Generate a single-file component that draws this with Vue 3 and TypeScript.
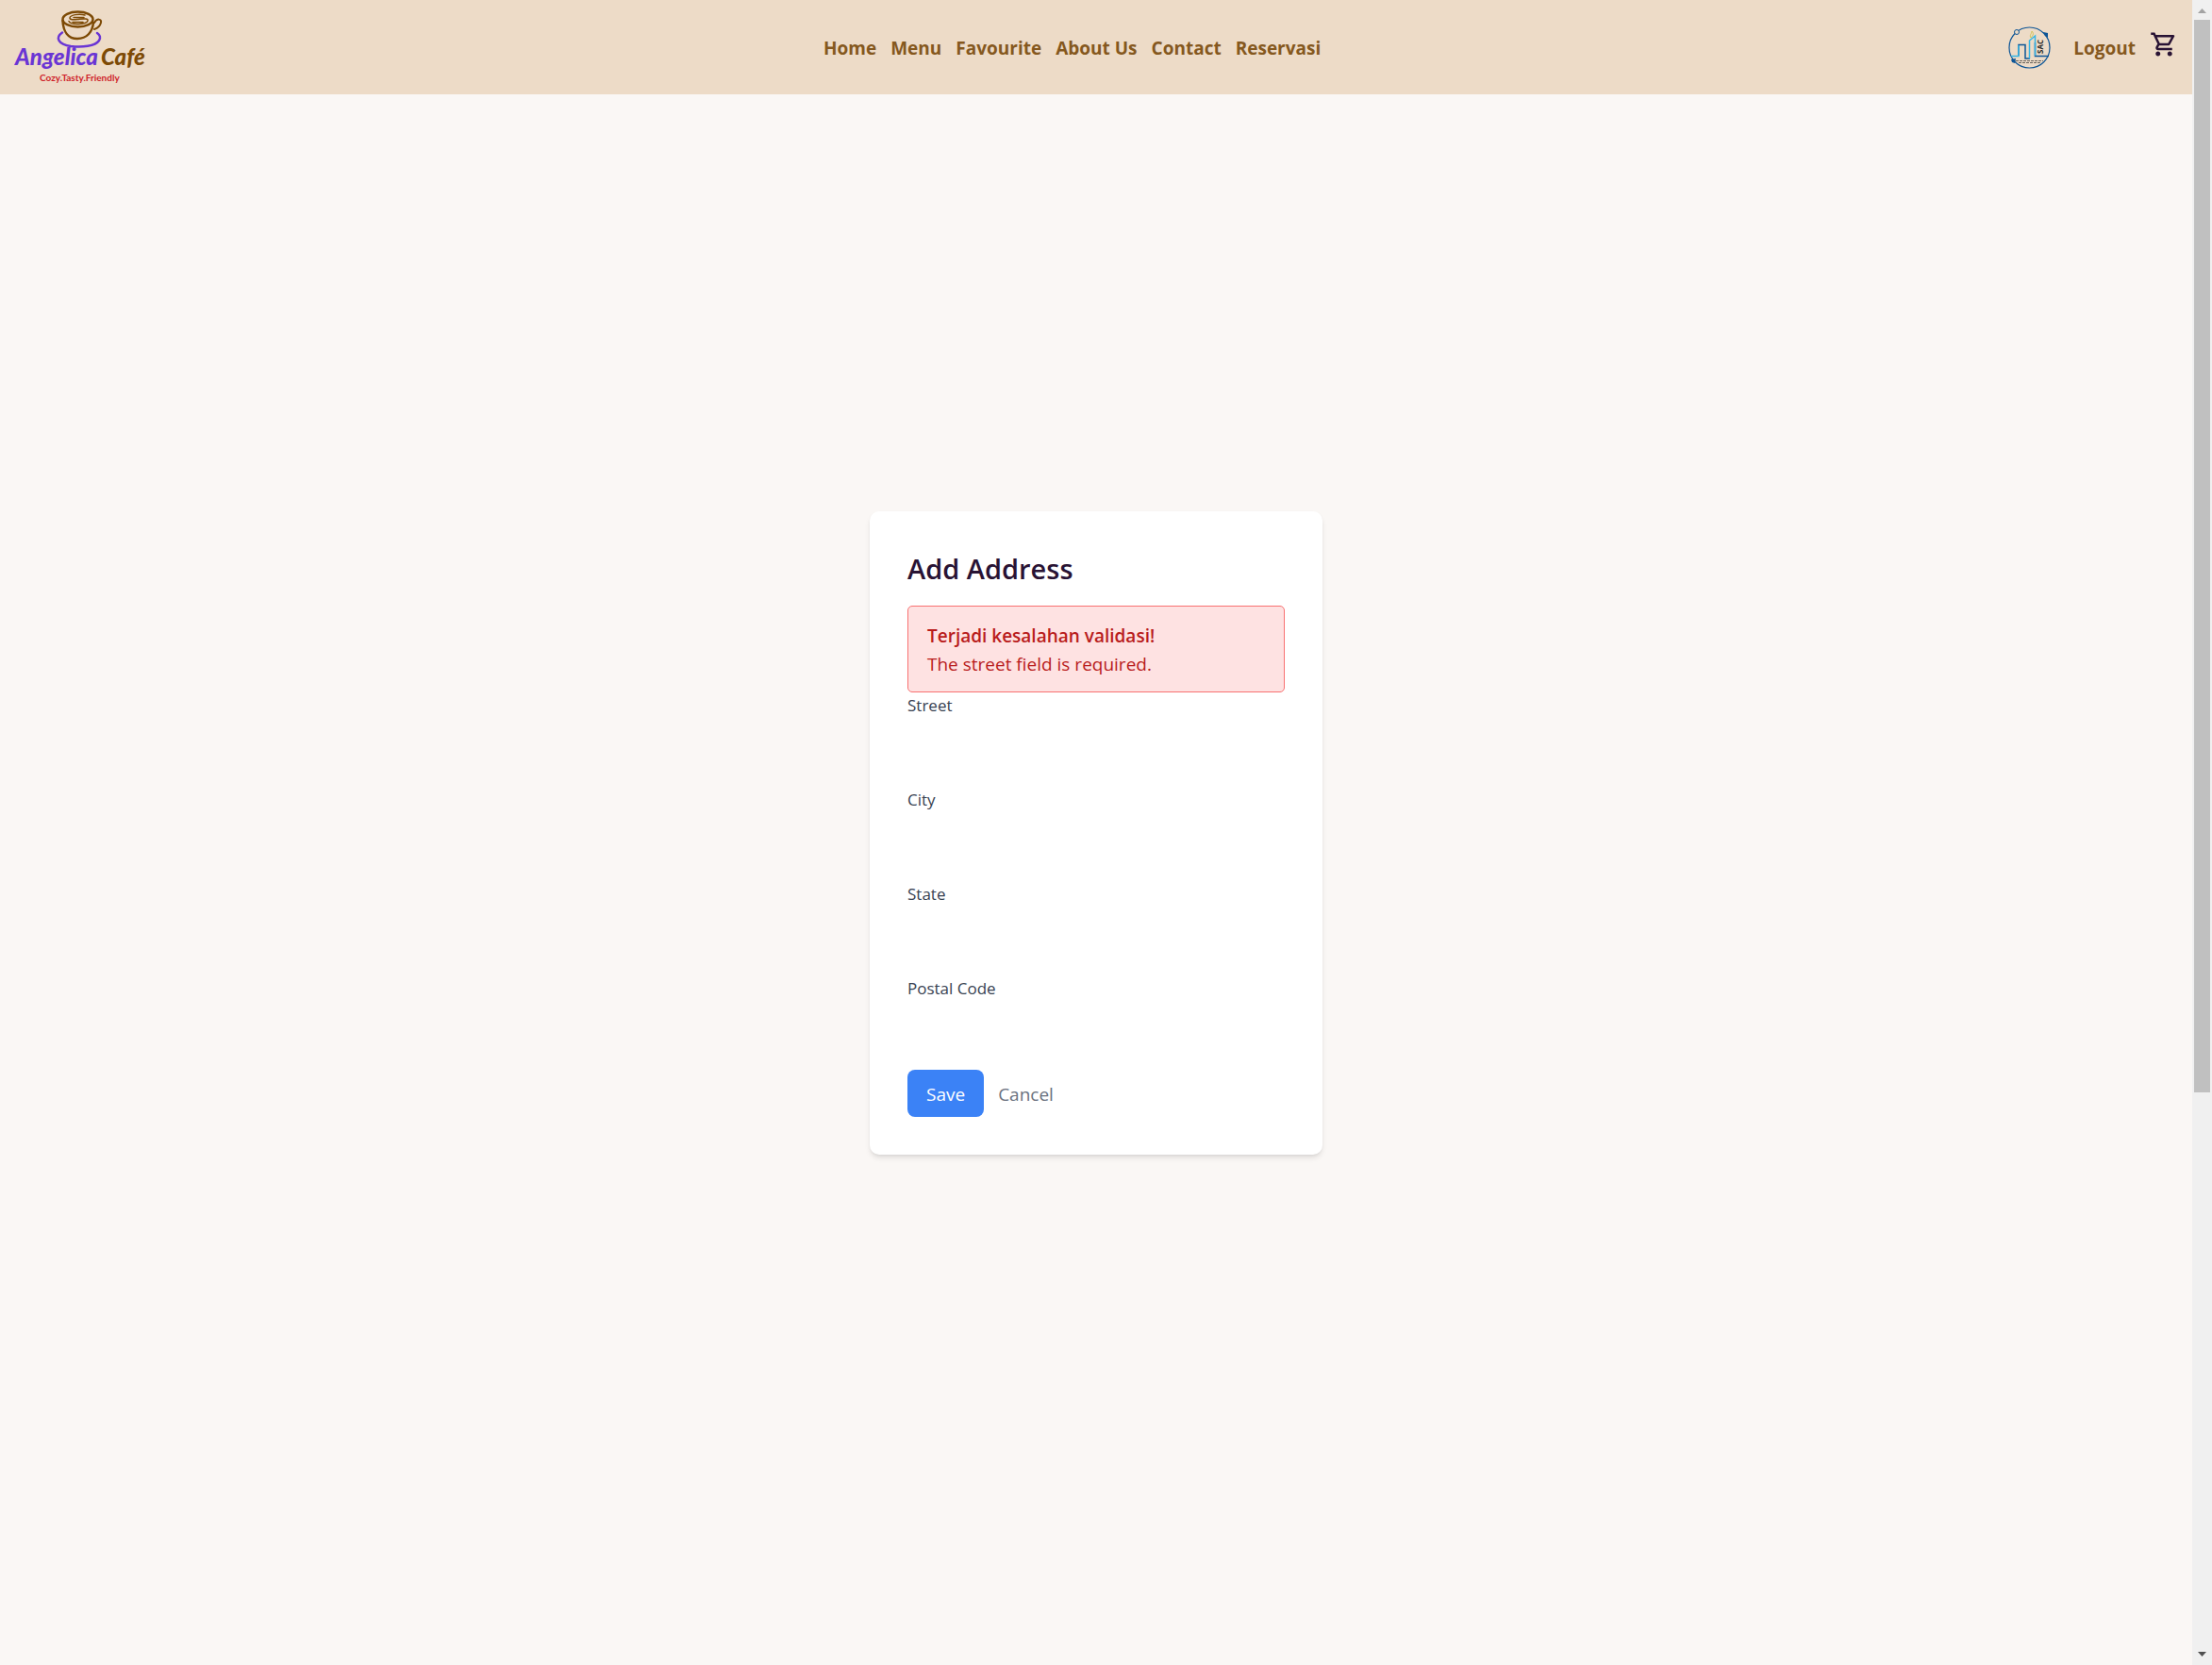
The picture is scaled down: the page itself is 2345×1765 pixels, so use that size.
<script setup lang="ts">
import { ref } from 'vue'

interface Field {
  id: string
  label: string
}

const links: string[] = ['Home', 'Menu', 'Favourite', 'About Us', 'Contact', 'Reservasi']

const fields: Field[] = [
  { id: 'street', label: 'Street' },
  { id: 'city', label: 'City' },
  { id: 'state', label: 'State' },
  { id: 'postal_code', label: 'Postal Code' },
]

const values = ref<Record<string, string>>({ street: '', city: '', state: '', postal_code: '' })
const errors = ref<string[]>(['The street field is required.'])
</script>

<template>
  <div class="window">
    <div class="page">
      <header class="navbar">
        <a href="#" class="logo" aria-label="Angelica Café">
          <svg width="140" height="80" viewBox="0 0 140 80">
            <g fill="none" stroke="#6a35d4" stroke-linecap="round">
              <path d="M51 24.500C43 30 47 37 60 39C72 40.500 86 39 90 33C92 30 91 27 88 25" stroke-width="2.500" />
            </g>
            <g fill="none" stroke="#7d4a05" stroke-linecap="round">
              <ellipse cx="67.500" cy="10.500" rx="16" ry="8" stroke-width="2.500" />
              <path d="M51.500 12C52 23 57 31 67 31C77 31 83 24 84 14" stroke-width="2.500" />
              <path d="M85 14C88 9 93 10 92 14C91 18 88 20 85 21" stroke-width="2" />
              <path d="M75 6C69 4 59 6 59 9C59 11 63 11 67 10.500C73 10 79 9 78 12C77 16 60 17 58 12.500M63 8.500H74M62 13.500H73" stroke-width="1.500" />
            </g>
            <text x="1" y="59" class="logo-name" fill="#6a35d4">Angelica</text>
            <text x="92" y="59" class="logo-name" fill="#7d4a05">Café</text>
            <text x="27" y="76" class="logo-tag" fill="#cf1f2b">Cozy.Tasty.Friendly</text>
          </svg>
        </a>

        <nav class="links">
          <a v-for="link in links" :key="link" href="#">{{ link }}</a>
        </nav>

        <div class="account">
          <a href="#" class="avatar" aria-label="Profile">
            <svg width="45" height="45" viewBox="0 0 45 45">
              <g fill="none" stroke="#0d5596" stroke-width="1.200">
                <circle cx="22.500" cy="22.500" r="21.500" />
                <path d="M11 31V19.500H18V34H23M28.500 17V31.500H43" stroke-width="1.500" />
              </g>
              <path d="M3 31.500H11V20M22.500 34V15L28.500 10V31" fill="none" stroke="#35b5e5" stroke-width="1.500" />
              <path d="M24 12C22 9 25 8 25 5C27 7 27 9 24 12" fill="none" stroke="#d3c557" />
              <circle cx="9" cy="6" r="2.500" fill="#eddbc7" stroke="#0d5596" />
              <path d="M37 6L42 7L42 12L39 10ZM3 35L8 34L7 39L4 38Z" fill="#0d5596" />
              <path d="M8 36.500H37M11 38.500H34" stroke="#6a655d" stroke-width="1" stroke-dasharray="3 1" />
              <text transform="translate(37 29) rotate(-90)" class="avatar-text">SAC</text>
            </svg>
          </a>
          <a href="#" class="logout">Logout</a>
          <a href="#" class="cart" aria-label="Cart">
            <svg width="30" height="30" viewBox="0 0 24 24" fill="#291334">
              <path d="M15.550 13c.75 0 1.410-.41 1.750-1.030l3.580-6.490A.996.996 0 0 0 20.010 4H5.210l-.94-2H1v2h2l3.600 7.590-1.350 2.440C4.520 15.370 5.480 17 7 17h12v-2H7l1.100-2h7.450zM6.160 6h12.150l-2.760 5H8.530L6.160 6zM7 18c-1.100 0-1.990.9-1.990 2S5.900 22 7 22s2-.9 2-2-.9-2-2-2zm10 0c-1.100 0-1.990.9-1.990 2s.89 2 1.990 2 2-.9 2-2-.9-2-2-2z" />
            </svg>
          </a>
        </div>
      </header>

      <main class="content">
        <section class="card">
          <h2>Add Address</h2>
          <div class="alert" role="alert">
            <strong>Terjadi kesalahan validasi!</strong>
            <ul>
              <li v-for="error in errors" :key="error">{{ error }}</li>
            </ul>
          </div>
          <form @submit.prevent>
            <div v-for="field in fields" :key="field.id" class="field">
              <label :for="field.id">{{ field.label }}</label>
              <input :id="field.id" v-model="values[field.id]" type="text" :name="field.id" />
            </div>
            <div class="actions">
              <button type="submit">Save</button>
              <a href="#">Cancel</a>
            </div>
          </form>
        </section>
      </main>
    </div>

    <div class="scrollbar" aria-hidden="true">
      <svg width="9" height="5" viewBox="0 0 9 5"><path d="M0 5L4.500 0L9 5Z" fill="#a3a3a3" /></svg>
      <div class="track"><div class="thumb"></div></div>
      <svg width="9" height="5" viewBox="0 0 9 5"><path d="M0 0L4.500 5L9 0Z" fill="#505050" /></svg>
    </div>
  </div>
</template>

<style>
body {
  margin: 0;
  background: #faf7f5;
}
</style>

<style scoped>
* {
  box-sizing: border-box;
}

.window {
  display: flex;
  min-height: 100vh;
  font-family: "Open Sans", "Noto Sans", sans-serif;
  font-size: 19px;
  line-height: 30px;
  color: #291334;
}

a {
  color: inherit;
  text-decoration: none;
}

.page {
  flex: 1;
  display: flex;
  flex-direction: column;
}

.navbar {
  display: flex;
  align-items: center;
  justify-content: space-between;
  height: 100px;
  padding: 0 15px;
  background: #eddbc7;
  color: #85581e;
  font-weight: 700;
}

.logo svg,
.avatar svg,
.cart svg {
  display: block;
}

.logo-name {
  font: italic 900 24px Lato, sans-serif;
}

.logo-tag {
  font: 700 10px Lato, sans-serif;
}

.avatar-text {
  font: 700 8px "Open Sans", sans-serif;
  fill: #2b2b2b;
}

.links {
  display: flex;
  gap: 15px;
  padding-top: 2px;
}

.account {
  display: flex;
  align-items: center;
  padding-left: 11px;
}

.logout {
  margin: 0 15px 0 24px;
  padding-top: 2px;
}

.cart {
  padding-bottom: 6px;
}

.content {
  flex: 1;
  display: flex;
  align-items: center;
  justify-content: center;
  padding-bottom: 99px;
}

.card {
  width: 480px;
  padding: 40px;
  border-radius: 10px;
  background: #fff;
  box-shadow: 0 4px 6px -1px rgba(0, 0, 0, 0.1), 0 2px 4px -2px rgba(0, 0, 0, 0.1);
}

h2 {
  margin: 0 0 18px;
  font-size: 29px;
  font-weight: 600;
  line-height: 42px;
}

.alert {
  padding: 16px 20px 14px;
  border: 1px solid #f87171;
  border-radius: 5px;
  background: #fee2e2;
  color: #b91c1c;
}

.alert strong {
  display: block;
  font-weight: 600;
}

.alert ul {
  margin: 0;
  padding: 0;
  list-style: none;
}

.field {
  margin-bottom: 20px;
}

.field label {
  display: block;
  font-size: 17px;
  font-weight: 500;
  line-height: 27px;
  color: #374151;
}

.field input {
  display: block;
  width: 100%;
  height: 50px;
  margin-top: 3px;
  padding: 0 10px;
  border: 0;
  border-radius: 8px;
  background: #fff;
  font: inherit;
}

.actions {
  display: flex;
  align-items: center;
  gap: 15px;
}

.actions button {
  padding: 11px 20px 9px;
  border: 0;
  border-radius: 8px;
  background: #3b82f6;
  color: #fff;
  font: inherit;
  font-weight: 500;
}

.actions a {
  padding-top: 2px;
  color: #6b7280;
}

.scrollbar {
  display: flex;
  flex-direction: column;
  align-items: center;
  width: 21px;
  padding: 9px 0;
  background: #f0f0f0;
}

.track {
  flex: 1;
  width: 17px;
  margin: 7px 0;
}

.thumb {
  height: 66%;
  background: #c0c0c0;
}
</style>
